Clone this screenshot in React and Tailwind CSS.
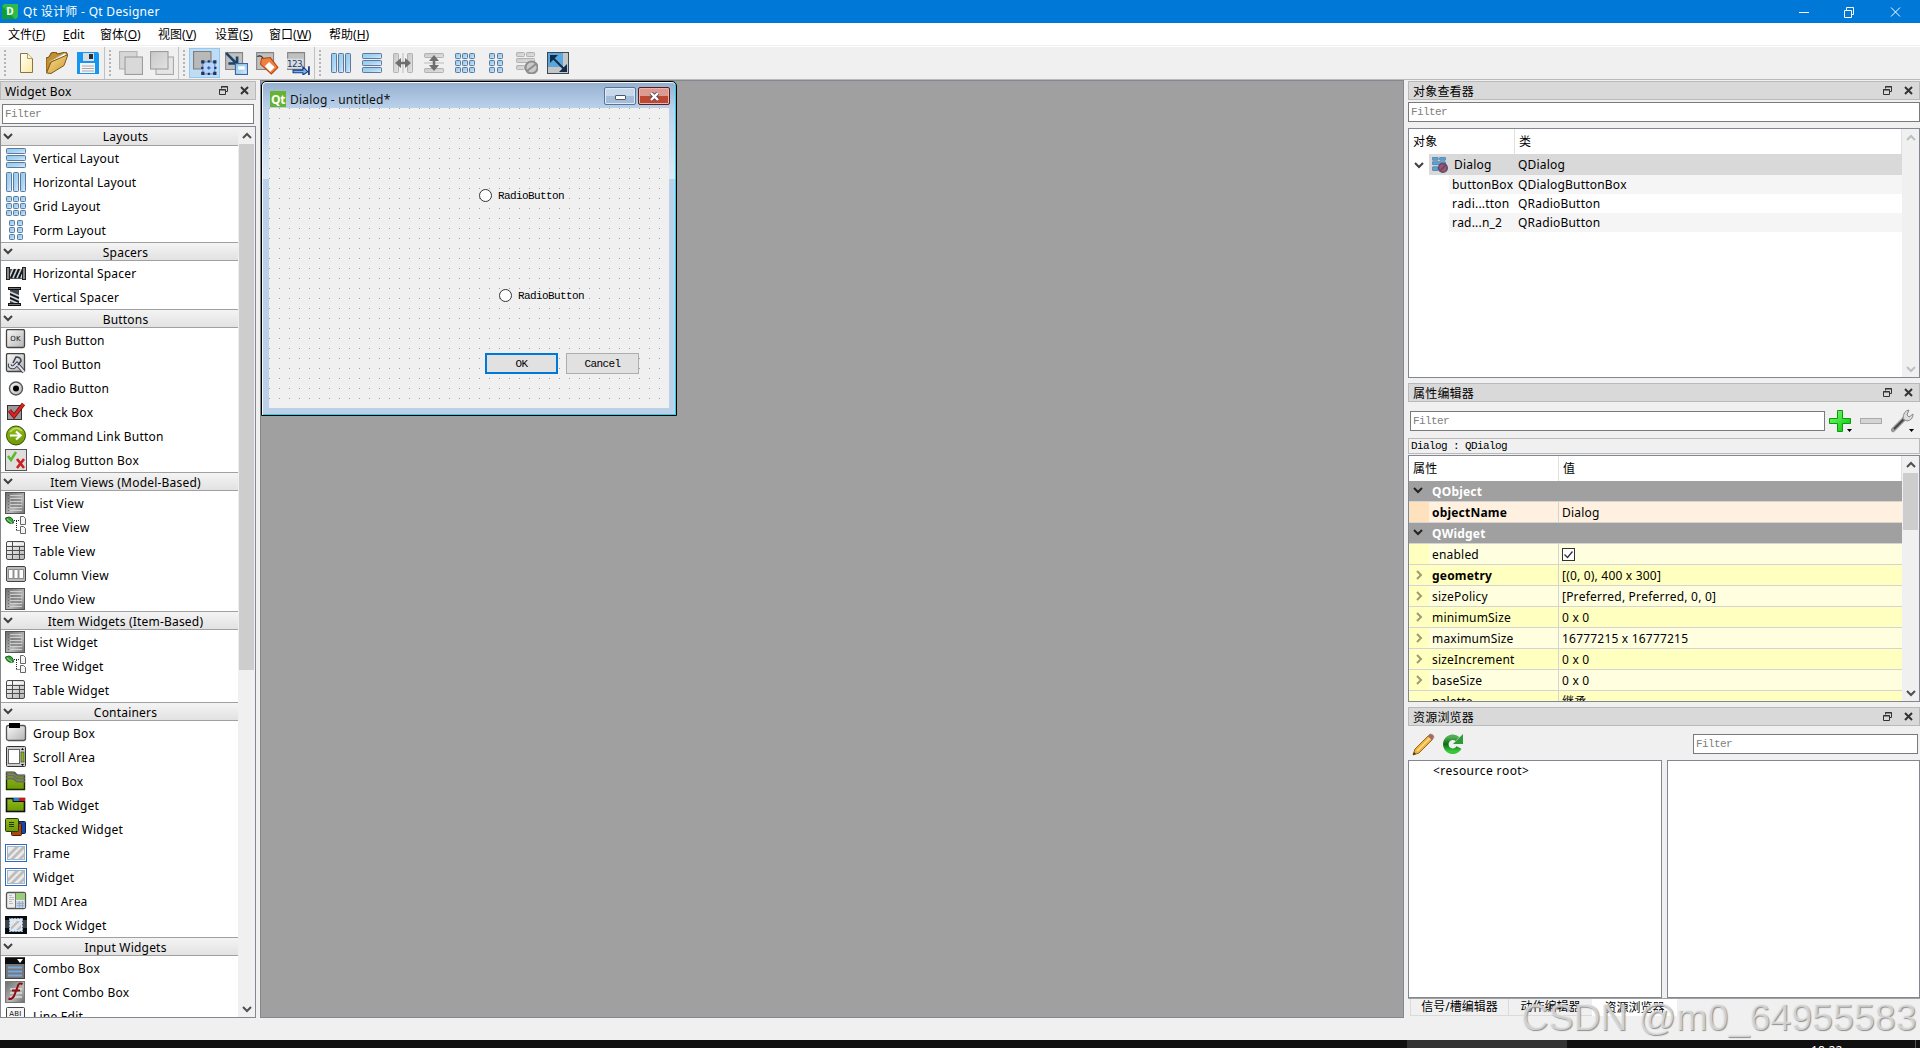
const simsun = "font-['Liberation_Mono','Noto_Sans_CJK_SC',monospace] text-[11px] tracking-[-0.6px]";

/* Shared gradients, referenced by id from every icon. */
function Gradients() {
    return (
        <svg className="absolute h-0 w-0">
            <defs>
                <linearGradient id="blue" x1="0" y1="0" x2="1" y2="1">
                    <stop offset="0" stopColor="#8ccbf2" />
                    <stop offset="0.55" stopColor="#a9d5f2" />
                    <stop offset="1" stopColor="#dcf1fd" />
                </linearGradient>
                <linearGradient id="grey" x1="0" y1="0" x2="1" y2="1">
                    <stop offset="0" stopColor="#fafafa" />
                    <stop offset="1" stopColor="#b4b4b4" />
                </linearGradient>
                <linearGradient id="pale" x1="0" y1="0" x2="1" y2="1">
                    <stop offset="0" stopColor="#c8c8c8" />
                    <stop offset="1" stopColor="#e2e2e2" />
                </linearGradient>
                <linearGradient id="darkgrey" x1="0" y1="0" x2="1" y2="1">
                    <stop offset="0" stopColor="#6c6c6c" />
                    <stop offset="0.6" stopColor="#b8b8b8" />
                    <stop offset="1" stopColor="#6c6c6c" />
                </linearGradient>
                <linearGradient id="green" x1="0" y1="0" x2="0" y2="1">
                    <stop offset="0" stopColor="#8fba1c" />
                    <stop offset="1" stopColor="#6d9a05" />
                </linearGradient>
                <linearGradient id="page" x1="0" y1="0" x2="1" y2="1">
                    <stop offset="0" stopColor="#ffffff" />
                    <stop offset="1" stopColor="#fbe9a0" />
                </linearGradient>
                <linearGradient id="folder" x1="0" y1="0" x2="1" y2="1">
                    <stop offset="0" stopColor="#f8dc8c" />
                    <stop offset="1" stopColor="#cf9a35" />
                </linearGradient>
                <linearGradient id="plus" x1="0" y1="0" x2="1" y2="1">
                    <stop offset="0" stopColor="#7dff7a" />
                    <stop offset="1" stopColor="#00c400" />
                </linearGradient>
                <linearGradient id="refresh" x1="0" y1="0" x2="0" y2="1">
                    <stop offset="0" stopColor="#4fae50" />
                    <stop offset="0.5" stopColor="#0b6a14" />
                    <stop offset="1" stopColor="#35c93a" />
                </linearGradient>
            </defs>
        </svg>
    );
}

const Svg = ({ children, className = 'h-[22px] w-[22px]', box = '0 0 22 22' }) => (
    <svg viewBox={box} className={`block shrink-0 ${className}`} fill="none">
        {children}
    </svg>
);

const Bars = ({ rects, stroke = '#5f789b', fill = 'url(#blue)' }) =>
    rects.map(([x, y, w, h]) => (
        <rect key={`${x}-${y}`} x={x + 0.5} y={y + 0.5} width={w - 1} height={h - 1} rx="0.8" fill={fill} stroke={stroke} />
    ));

const grid = (xs, ys, w, h) => ys.flatMap((y) => xs.map((x) => [x, y, w, h]));

const VBars = () => <Bars rects={[[1, 1, 6, 20], [8, 1, 6, 20], [15, 1, 6, 20]]} />;
const HBars = () => <Bars rects={[[1, 1, 20, 6], [1, 8, 20, 6], [1, 15, 20, 6]]} />;
const Grid = () => <Bars rects={grid([1, 8, 15], [1, 8, 15], 6, 6)} />;
const Form = () => <Bars rects={grid([4, 12], [1, 8, 15], 6, 6)} />;

const ListIcon = () => (
    <>
        <rect x="0.5" y="0.5" width="19" height="21" fill="url(#darkgrey)" stroke="#555" />
        <path d="M5 3.5h12M5 6.5h12M5 9.5h12M5 12.5h12M5 15.5h12M5 18.5h12" stroke="#cfcfcf" />
        <path d="M3 3.5h1M3 6.5h1M3 9.5h1M3 12.5h1M3 15.5h1M3 18.5h1M6 8h10M6 11h10M6 14h10" stroke="#5a5a5a" strokeWidth="0.8" />
    </>
);
const TreeIcon = () => (
    <>
        <path d="M0.5 2q4-2 6 0t2 5q-4 1-6-1t-2-4z" fill="#3f9d43" stroke="#175f1d" />
        <path d="M2 3l5 4" stroke="#9be39b" />
        <path d="M9 4.5h6M11.500 5v10M11.500 14.500h4" stroke="#222" strokeDasharray="1 1" />
        <path d="M15.500 0.500h3l2 2v6h-5zM15.500 10.500h3l2 2v5h-5z" fill="#f5f5f5" stroke="#666" />
    </>
);
const TableIcon = () => (
    <>
        <rect x="1.500" y="1.500" width="18" height="18" rx="1.500" fill="url(#grey)" stroke="#4b4b4b" />
        <path d="M2 4h17" stroke="#fff" strokeWidth="2" opacity=".6" />
        <path d="M7.500 2v17M14.500 7v12M2 6.500h17M2 10.500h17M2 14.500h17" stroke="#4d4d4d" />
    </>
);
const Stripes = () => (
    <>
        <rect x="0.500" y="2.500" width="21" height="17" fill="#fff" stroke="#2c6cc0" />
        <rect x="2.500" y="4.500" width="17" height="13" fill="#ececec" stroke="#aab4c4" />
        <path d="M3 12l7-7h4L3 16zM5 17L17 5h2v2L9 17zM13 17l6-6v4l-2 2z" fill="#bdbdbd" />
    </>
);

const widgetIcons = {
    vlayout: <HBars />,
    hlayout: <VBars />,
    grid: <Grid />,
    form: <Form />,
    hspacer: (
        <>
            <path d="M4 7h14v10H4z" fill="#555" />
            <path d="M4 16l4-9M8 16l4-9M12 16l4-9M16 16l2-6" stroke="#c8d8e4" strokeWidth="1.500" />
            <path d="M6 16l4-9M10 16l4-9M14 16l4-9" stroke="#111" strokeWidth="1.500" />
            <rect x="1.500" y="5.500" width="3" height="12" fill="#888" stroke="#222" />
            <rect x="17.500" y="5.500" width="3" height="12" fill="#888" stroke="#222" />
        </>
    ),
    vspacer: (
        <>
            <path d="M5 4h9v14H5z" fill="#444" />
            <path d="M5 6l9 4M5 10l9 4M5 14l9 4" stroke="#c8d8e4" strokeWidth="1.500" />
            <path d="M5 8l9 4M5 12l9 4" stroke="#0c0c0c" strokeWidth="1.200" />
            <rect x="3.500" y="1.500" width="12" height="2" fill="#777" stroke="#111" />
            <rect x="3.500" y="17.500" width="12" height="2" fill="#777" stroke="#111" />
        </>
    ),
    push: (
        <>
            <rect x="1.500" y="0.500" width="18" height="18" rx="1.500" fill="url(#grey)" stroke="#444" strokeWidth="1.300" />
            <text x="10.500" y="12" textAnchor="middle" fill="#111" className="font-['DejaVu_Sans'] text-[7px]">OK</text>
        </>
    ),
    tool: (
        <>
            <rect x="1.500" y="0.500" width="18" height="18" rx="1.500" fill="url(#grey)" stroke="#444" strokeWidth="1.300" />
            <path d="M5 11q-1 4 4 3l3-3 7 8" stroke="#3b4252" strokeWidth="4" />
            <path d="M5 11q-1 4 4 3l3-3 7 8" stroke="#dfe2e6" strokeWidth="2" />
            <path d="M8 10l3-6q5 0 5 4l-3 4" stroke="#3b4252" strokeWidth="1.600" />
        </>
    ),
    radio: (
        <>
            <circle cx="11" cy="11.500" r="6.500" fill="url(#grey)" stroke="#555" strokeWidth="1.400" />
            <circle cx="11" cy="11.500" r="3" fill="#000" />
        </>
    ),
    check: (
        <>
            <rect x="2.500" y="4.500" width="14" height="14" fill="#999" stroke="#333" />
            <path d="M4.500 9.500l4.500 5.500 9.500-12" stroke="#701010" strokeWidth="4" />
            <path d="M4.500 9.500l4.500 5.500 9.500-12" stroke="#e02222" strokeWidth="2.400" />
        </>
    ),
    command: (
        <>
            <circle cx="11" cy="10.500" r="9.500" fill="url(#green)" stroke="#384c05" />
            <path d="M5 7q6-7 12-1" stroke="#c2dd6c" strokeWidth="1.500" />
            <path d="M5 10.500h10M11 6.500l4.500 4-4.500 4" stroke="#fff" strokeWidth="2.200" />
        </>
    ),
    buttonbox: (
        <>
            <rect x="0.500" y="0.500" width="21" height="21" fill="#dedede" stroke="#555" />
            <path d="M3 7l3 4 5-8" stroke="#5cba2c" strokeWidth="2.500" />
            <path d="M12 10l7 9M19 10l-7 9" stroke="#cc1f1f" strokeWidth="2.600" />
        </>
    ),
    list: <ListIcon />,
    tree: <TreeIcon />,
    table: <TableIcon />,
    column: (
        <>
            <rect x="1.500" y="2.500" width="19" height="15" rx="1.500" fill="#bbb" stroke="#444" />
            <path d="M3.500 5.500h4.500v9H3.500zM9 5.500h4v9H9zM14 5.500h4.500v9h-4.500z" fill="#fff" stroke="#777" strokeWidth=".8" />
        </>
    ),
    group: (
        <>
            <rect x="1.500" y="3.500" width="19" height="15" rx="2" fill="url(#grey)" stroke="#555" strokeWidth="1.300" />
            <rect x="4" y="1" width="11" height="5" fill="#000" />
        </>
    ),
    scroll: (
        <>
            <rect x="1.500" y="0.500" width="19" height="20" rx="1" fill="#ccc" stroke="#333" />
            <rect x="3.500" y="3.500" width="11" height="14" fill="#fff" stroke="#666" />
            <rect x="16" y="6" width="3" height="10" fill="#8ab81c" stroke="#333" strokeWidth=".6" />
            <path d="M16 4l1.500-2L19 4zM16 18l1.500 2 1.500-2z" fill="#000" />
        </>
    ),
    toolbox: (
        <>
            <path d="M1.500 2.500h8l3 3h7v14h-18z" fill="url(#green)" stroke="#1c2a00" strokeWidth="1.400" />
            <path d="M1 2.500h7l4 3h8M1 5.500h7l4 3h8M1 8.500h7l4 3h8" stroke="#6a6a6a" strokeWidth="1.800" />
        </>
    ),
    tab: (
        <>
            <rect x="1.500" y="4.500" width="18" height="13" fill="url(#green)" stroke="#111" strokeWidth="1.600" />
            <rect x="8" y="4" width="6" height="3" fill="#1d86d0" />
            <rect x="14" y="4" width="6" height="3" fill="#d01818" />
            <path d="M8 4v3.500h12" stroke="#111" />
        </>
    ),
    stacked: (
        <>
            <rect x="10.500" y="3.500" width="10" height="12" rx="1" fill="#1748a8" stroke="#0b1e50" />
            <rect x="6.500" y="5.500" width="10" height="12" rx="1" fill="#a84712" stroke="#4c1c02" />
            <rect x="0.500" y="0.500" width="13" height="13" rx="1" fill="url(#green)" stroke="#26380a" />
            <path d="M4 4.500h5M4 6.500h5M4 8.500h5" stroke="#263800" />
        </>
    ),
    frame: <Stripes />,
    mdi: (
        <>
            <rect x="1.500" y="2.500" width="19" height="16" rx="1.500" fill="#eee" stroke="#555" strokeWidth="1.300" />
            <rect x="11" y="3" width="9" height="7" fill="#9ccb7c" />
            <rect x="11" y="11" width="9" height="7" fill="#bcd4ee" />
            <path d="M4 5.500h3M4 7.500h5M4 9.500h5M4 11.500h3M4 13.500h4M12 13.500h7M12 15.500h7M14.500 11v7M17.500 11v7" stroke="#999" strokeWidth=".6" />
            <path d="M10.500 3v15" stroke="#777" />
        </>
    ),
    dock: (
        <>
            <rect x="0" y="2" width="22" height="18" fill="#0a0a0a" />
            <path d="M0 6h22v8H0z" fill="#777" opacity=".5" />
            <rect x="4.500" y="4.500" width="13" height="13" fill="#e6e6e6" stroke="#fff" />
            <rect x="4.500" y="4.500" width="13" height="13" stroke="#2c6cc0" strokeDasharray="2 1" />
            <path d="M6 13l6-6h3l-9 9zM11 16l5-5v3l-2 2z" fill="#bbb" />
        </>
    ),
    combo: (
        <>
            <rect x="0.500" y="0.500" width="19" height="21" fill="#777" stroke="#444" />
            <rect x="0" y="1" width="20" height="6" fill="#0c0c0c" />
            <path d="M12 2h6l-3 4z" fill="#fff" />
            <path d="M3 10.500h14M3 14.500h14M3 18.500h14" stroke="#76a7e0" strokeWidth="2" />
        </>
    ),
    font: (
        <>
            <rect x="0.500" y="0.500" width="19" height="21" fill="url(#darkgrey)" stroke="#777" />
            <path d="M5 8h12M5 12h12M5 16h12" stroke="#ddd" strokeWidth="1.500" />
            <path d="M17.500 3q-4-2-5 3L9 15q-2 4-5.500 2.500M7 9.500h8" stroke="#8d0c10" strokeWidth="2" />
        </>
    ),
    line: (
        <>
            <rect x="1.500" y="2.500" width="18" height="12" rx="1" fill="#f6f6f6" stroke="#444" />
            <text x="10.500" y="11" textAnchor="middle" fill="#111" className="font-['DejaVu_Sans'] text-[7px]">ABI</text>
        </>
    ),
};

const categories = [
    { title: 'Layouts', items: [['vlayout', 'Vertical Layout'], ['hlayout', 'Horizontal Layout'], ['grid', 'Grid Layout'], ['form', 'Form Layout']] },
    { title: 'Spacers', items: [['hspacer', 'Horizontal Spacer'], ['vspacer', 'Vertical Spacer']] },
    {
        title: 'Buttons',
        items: [['push', 'Push Button'], ['tool', 'Tool Button'], ['radio', 'Radio Button'], ['check', 'Check Box'], ['command', 'Command Link Button'], ['buttonbox', 'Dialog Button Box']],
    },
    { title: 'Item Views (Model-Based)', items: [['list', 'List View'], ['tree', 'Tree View'], ['table', 'Table View'], ['column', 'Column View'], ['list', 'Undo View']] },
    { title: 'Item Widgets (Item-Based)', items: [['list', 'List Widget'], ['tree', 'Tree Widget'], ['table', 'Table Widget']] },
    {
        title: 'Containers',
        items: [
            ['group', 'Group Box'], ['scroll', 'Scroll Area'], ['toolbox', 'Tool Box'], ['tab', 'Tab Widget'], ['stacked', 'Stacked Widget'],
            ['frame', 'Frame'], ['frame', 'Widget'], ['mdi', 'MDI Area'], ['dock', 'Dock Widget'],
        ],
    },
    { title: 'Input Widgets', items: [['combo', 'Combo Box'], ['font', 'Font Combo Box'], ['line', 'Line Edit']] },
];

const menus = [
    ['文件', 'F', 'w-[55px]'],
    ['', 'Edit', 'w-[37px]'],
    ['窗体', 'O', 'w-[58px]'],
    ['视图', 'V', 'w-[57px]'],
    ['设置', 'S', 'w-[54px]'],
    ['窗口', 'W', 'w-[60px]'],
    ['帮助', 'H', 'w-[60px]'],
];

const Chevron = ({ dir = 'down', color = '#404040' }) => {
    const paths = { down: 'M1 3l4 4 4-4', up: 'M1 7l4-4 4 4', right: 'M3 1l4 4-4 4' };
    return (
        <Svg box="0 0 10 10" className="h-[10px] w-[10px]">
            <path d={paths[dir]} stroke={color} strokeWidth="2" />
        </Svg>
    );
};

function DockTitle({ children }) {
    return (
        <div className="flex h-[19px] shrink-0 items-center border border-[#b9b9b9] bg-[#d9d9d9] pl-1 text-black">
            <span className="flex-1 pt-[2px]">{children}</span>
            <Svg box="0 0 9 9" className="h-[9px] w-[9px]">
                <path d="M2.500 2.500v-2h6v5h-2M2 1h7M.500 3.500h6v5h-6zM0 4h7" stroke="#333" />
            </Svg>
            <Svg box="0 0 9 9" className="ml-3 mr-[6px] h-[9px] w-[9px]">
                <path d="M1 1l7 7M8 1l-7 7" stroke="#333" strokeWidth="2" />
            </Svg>
        </div>
    );
}

const Filter = ({ className }) => (
    <div className={`flex shrink-0 items-center border border-[#7a7a7a] bg-white pl-[2px] pt-px text-[#808080] ${simsun} ${className}`}>Filter</div>
);

function ScrollBar({ thumb, disabled }) {
    const color = disabled ? '#bfbfbf' : '#505050';
    return (
        <div className="flex w-[17px] shrink-0 flex-col items-center bg-[#f0f0f0]">
            <div className="flex h-[17px] shrink-0 items-center"><Chevron dir="up" color={color} /></div>
            <div className={`w-[15px] bg-[#cdcdcd] ${thumb}`} />
            <div className="flex-1" />
            <div className="flex h-[17px] shrink-0 items-center"><Chevron color={color} /></div>
        </div>
    );
}

const Handle = () => (
    <div className="mt-[3px] h-[27px] w-[2px] shrink-0 bg-[repeating-linear-gradient(to_bottom,#b4b4b4_0_2px,transparent_2px_4px)]" />
);

const Divider = () => <div className="ml-px mr-1 h-[32px] w-px shrink-0 bg-[#c0c0c0]" />;

const GreyBack = () => <path d="M1.500 1.500h15.500v15.500h-15.500z" fill="#c0c0c0" stroke="#848484" />;

const fileTools = [
    <>
        <path d="M5.500 1.500h7l5 5v14h-12z" fill="url(#page)" stroke="#8c7440" />
        <path d="M12.500 1.500v5h5" fill="#fff6cc" stroke="#b29a5c" />
    </>,
    <>
        <path d="M0 20V6l3-1 2-4 5-1 1 2 9-2 2 3" fill="#c48f2e" stroke="#6f4e12" />
        <path d="M3 10L19 1l2 3" fill="#fff" stroke="#c0b48c" />
        <path d="M0.500 21l4.500-11 17-7.500-4 11L5 21.500z" fill="url(#folder)" stroke="#7a5717" />
    </>,
    <>
        <path d="M0 0h21l1 2v20H0z" fill="#1496f2" />
        <rect x="6" y="1" width="11" height="8" fill="#d8dde2" />
        <rect x="12" y="2" width="4" height="5" fill="#2a2f35" />
        <rect x="3" y="11" width="15" height="10" fill="#f4f4f4" />
        <path d="M5 14h12M5 16.500h12M5 19h12" stroke="#a8a8a8" />
    </>,
];

const orderTools = [
    <>
        <rect x="0.500" y="0.500" width="16" height="16" fill="#d7d7d7" stroke="#b3b3b3" />
        <rect x="5.500" y="5.500" width="16" height="16" fill="#d9d9d9" stroke="#9d9d9d" />
    </>,
    <>
        <rect x="5.500" y="5.500" width="16" height="16" fill="#e5e5e5" stroke="#a9a9a9" />
        <rect x="0.500" y="0.500" width="16" height="16" fill="url(#pale)" stroke="#9d9d9d" />
    </>,
];

const editTools = [
    <>
        <path d="M0.500 0.500h16v16h-16z" fill="#b9b9b9" stroke="#7d7d7d" />
        <rect x="9" y="10" width="11" height="11" fill="#b4d2fc" stroke="#6d8fc2" />
        <path d="M7.500 8.500h3v3h-3zM13.500 8.500h2v2h-2zM18.500 8.500h3v3h-3zM7.500 14.500h2v2h-2zM19.500 14.500h2v2h-2zM7.500 19h3v3h-3zM13.500 20h2v2h-2zM18.500 19h3v3h-3z" fill="#1b365f" />
        <path d="M14.500 14v3M13 15.500h3" stroke="#2355a0" />
    </>,
    <>
        <GreyBack />
        <path d="M2 2l9 9M4 11.500h8V5" stroke="#1b4569" strokeWidth="2.400" />
        <rect x="10.500" y="11.500" width="11" height="10" fill="url(#blue)" stroke="#3c65a2" />
        <path d="M13 15.500h6" stroke="#fff" strokeWidth="3" />
    </>,
    <>
        <GreyBack />
        <path d="M2 5q5-2 6 4" stroke="#333" />
        <path d="M6 7l8-1 7 9-6 6-10-9z" fill="#f08040" stroke="#b54910" />
        <path d="M13 10l5 5-4 4-5-5z" fill="#fff" />
    </>,
    <>
        <GreyBack />
        <path d="M1 7h15v9H1z" fill="#dcdcdc" />
        <text x="1" y="14.500" fill="#123a7a" className="font-['DejaVu_Sans'] text-[8px] tracking-[-0.500px]">123</text>
        <path d="M6.500 17.500h9v-3l4.500 4.500-4.500 3v-2h-9z" fill="#7fb0f0" stroke="#153c80" />
        <path d="M21 14v8" stroke="#153c80" strokeWidth="1.600" />
    </>,
];

const GreyBars = ({ rects }) => <Bars rects={rects} fill="url(#pale)" stroke="#b1b1b1" />;

const layoutTools = [
    <VBars />,
    <HBars />,
    <>
        <GreyBars rects={[[1, 1, 6, 20], [15, 1, 6, 20]]} />
        <path d="M11 1v20" stroke="#bbb" />
        <path d="M5 11h12" stroke="#6e6e6e" strokeWidth="2.500" />
        <path d="M3 11l6-5v10zM19 11l-6-5v10z" fill="#6e6e6e" />
    </>,
    <>
        <GreyBars rects={[[1, 1, 20, 5], [1, 16, 20, 5]]} />
        <path d="M1 11h20" stroke="#bbb" />
        <path d="M11 5v12" stroke="#6e6e6e" strokeWidth="2.500" />
        <path d="M11 3l5 6H6zM11 19l5-6H6z" fill="#6e6e6e" />
    </>,
    <Grid />,
    <Form />,
    <>
        <GreyBars rects={[[0, 0, 9, 5], [10, 0, 9, 5], [0, 6, 19, 5], [0, 13, 9, 5]]} />
        <circle cx="15.500" cy="15.500" r="6" fill="#c9c9c9" stroke="#8e8e8e" strokeWidth="2" />
        <path d="M11 19l9-7" stroke="#8e8e8e" strokeWidth="2" />
    </>,
    <>
        <rect x="0.500" y="0.500" width="21" height="21" fill="#c5c5c5" stroke="#3d4855" />
        <rect x="1" y="1" width="15" height="14" fill="#5ba6da" />
        <path d="M5 5l13 13" stroke="#0f2d4c" strokeWidth="2" />
        <path d="M3 3h8l-8 8zM20 20h-8l8-8z" fill="#0f2d4c" />
    </>,
];

const ToolGroup = ({ tools, activeIndex, large }) => (
    <div className="ml-1 flex pt-px">
        {tools.map((tool, i) => (
            <div
                key={i}
                className={`flex h-[30px] w-[31px] shrink-0 items-center justify-center ${i === activeIndex ? 'border border-[#90c8f6] bg-[#c0dcf3]' : ''}`}
            >
                <Svg className={large ? 'h-6 w-6' : 'h-[22px] w-[22px]'}>{tool}</Svg>
            </div>
        ))}
    </div>
);

function Toolbar() {
    return (
        <div className="flex h-[32px] shrink-0 bg-[#f0f0f0] pl-1">
            <Handle />
            <ToolGroup tools={fileTools} />
            <Divider />
            <Handle />
            <ToolGroup tools={orderTools} large />
            <Divider />
            <Handle />
            <ToolGroup tools={editTools} activeIndex={0} large />
            <Divider />
            <Handle />
            <ToolGroup tools={layoutTools} />
        </div>
    );
}

function WidgetBox() {
    return (
        <div className="flex w-[256px] shrink-0 flex-col pt-px">
            <DockTitle>Widget Box</DockTitle>
            <Filter className="ml-[2px] mt-1 h-5 w-[252px]" />
            <div className="mt-[2px] flex h-[892px] overflow-hidden border border-[#828790] bg-white">
                <div className="h-full w-[237px] shrink-0 overflow-hidden">
                    {categories.map((category, index) => (
                        <div key={category.title}>
                            <div className={`flex h-[19px] items-center border-b border-[#a0a0a0] bg-linear-to-b from-[#f4f4f4] to-[#e2e2e2] pl-[2px] ${index ? 'border-t' : ''}`}>
                                <div className="pb-px"><Chevron /></div>
                                <span className="flex-1 pt-[2px] text-center">{category.title}</span>
                            </div>
                            {category.items.map(([icon, label]) => (
                                <div key={label} className="flex h-6 items-center pl-1">
                                    <Svg>{widgetIcons[icon]}</Svg>
                                    <span className="pl-[6px] pt-[2px]">{label}</span>
                                </div>
                            ))}
                        </div>
                    ))}
                </div>
                <ScrollBar thumb="h-[526px]" />
            </div>
        </div>
    );
}

/* The form being edited: its children sit at free positions on the dotted canvas. */
function DialogForm() {
    return (
        <div className="flex h-[335px] w-[416px] flex-col rounded-t-[5px] border border-black bg-[#bbd1ea] shadow-[inset_1px_1px_0_#f4f8fc,inset_-1px_-1px_0_#24d3ea]">
            <div className="mx-px mt-px flex h-[25px] shrink-0 rounded-t-[4px] bg-linear-to-b from-[#96b1d0] to-[#bad1ea] pl-[7px]">
                <Svg box="0 0 16 16" className="mt-2 h-4 w-4">
                    <rect width="16" height="16" fill="#65b32e" />
                    <text x="8" y="12.500" textAnchor="middle" fill="#fff" className="font-['Open_Sans'] text-[12px] font-bold tracking-[-0.500px]">Qt</text>
                </Svg>
                <span className="flex-1 pl-1 pt-[8px] leading-[17px] text-[#111]">Dialog - untitled*</span>
                <div className="mt-1 flex h-[18px] w-8 items-center justify-center rounded-[2px] border border-[#5a7396] bg-linear-to-b from-[#c8d9ec] from-50% to-[#a3bcd8] to-50% shadow-[inset_0_0_0_1px_#dfe9f5]">
                    <div className="mt-[3px] h-[5px] w-[11px] rounded-[1px] border border-[#4d5766] bg-white" />
                </div>
                <div className="ml-[2px] mr-[5px] mt-1 flex h-[18px] w-8 items-center justify-center rounded-[2px] border border-[#56201f] bg-linear-to-b from-[#dd9a91] from-50% to-[#bc4733] to-50% shadow-[inset_0_0_0_1px_#e9b5ad]">
                    <Svg box="0 0 11 9" className="h-[9px] w-[11px]">
                        <path d="M2 1l7 7M9 1L2 8" stroke="#5d4a5a" strokeWidth="4" />
                        <path d="M2 1l7 7M9 1L2 8" stroke="#fff" strokeWidth="2.400" />
                    </Svg>
                </div>
            </div>
            <div className="flex">
                <div className="ml-px h-[71px] w-[6px] bg-linear-to-b from-[#bbd1ea] to-[#e0eaf6]" />
                <div className={`relative h-[300px] w-[400px] bg-[#f0f0f0] bg-[linear-gradient(90deg,transparent_1px,#f0f0f0_1px),linear-gradient(#a0a0a0_1px,transparent_1px)] bg-[size:10px_10px] text-black ${simsun}`}>
                    <div className="absolute left-[210px] top-[80px] flex items-center gap-[6px] leading-[15px]">
                        <span className="h-[13px] w-[13px] rounded-full border border-[#333] bg-white" />
                        <span className="pt-[2px] leading-[13px]">RadioButton</span>
                    </div>
                    <div className="absolute left-[230px] top-[180px] flex items-center gap-[6px] leading-[15px]">
                        <span className="h-[13px] w-[13px] rounded-full border border-[#333] bg-white" />
                        <span className="pt-[2px] leading-[13px]">RadioButton</span>
                    </div>
                    <div className="absolute left-[216px] top-[245px] flex h-[21px] w-[73px] items-center justify-center border-2 border-[#0078d7] bg-[#e1e1e1] pt-[2px]">OK</div>
                    <div className="absolute left-[297px] top-[245px] flex h-[21px] w-[73px] items-center justify-center border border-[#adadad] bg-[#e1e1e1] pt-[2px]">Cancel</div>
                </div>
                <div className="h-[71px] w-[6px] bg-linear-to-b from-[#bbd1ea] to-[#e0eaf6]" />
            </div>
        </div>
    );
}

const objects = [
    ['buttonBox', 'QDialogButtonBox', 'bg-[#f5f5f5]'],
    ['radi...tton', 'QRadioButton', 'bg-white'],
    ['rad...n_2', 'QRadioButton', 'bg-[#f5f5f5]'],
];

function ObjectInspector() {
    return (
        <>
            <DockTitle>对象查看器</DockTitle>
            <Filter className="mt-[2px] h-5" />
            <div className="mt-[6px] flex h-[250px] shrink-0 border border-[#828790] bg-white">
                <div className="w-[493px] shrink-0">
                    <div className="flex h-[25px] items-center border-r border-[#e0e0e0]">
                        <span className="flex h-full w-[106px] items-center border-r border-[#e0e0e0] pl-1 pt-px">对象</span>
                        <span className="pl-1 pt-px">类</span>
                    </div>
                    <div className="flex h-[21px] items-center pl-[5px]">
                        <Chevron />
                        <div className="ml-[5px] flex h-full flex-1 items-center bg-[#d9d9d9] pl-[3px]">
                            <Svg className="h-4 w-4" box="0 0 22 22">
                                <Bars rects={[[0, 0, 9, 5], [10, 0, 9, 5], [0, 6, 19, 5], [0, 13, 9, 6]]} fill="#5ea3d6" stroke="#4677a3" />
                                <circle cx="15" cy="15" r="6" fill="#a5536c" stroke="#5a4a6c" strokeWidth="2" />
                                <path d="M11 19l8-8" stroke="#5a4a6c" strokeWidth="2" />
                            </Svg>
                            <span className="w-[70px] pl-[6px] pt-px">Dialog</span>
                            <span className="pt-px">QDialog</span>
                        </div>
                    </div>
                    {objects.map(([name, type, bg]) => (
                        <div key={name} className={`ml-10 flex h-[19px] items-center pl-[3px] pt-px ${bg}`}>
                            <span className="w-[66px]">{name}</span>
                            <span>{type}</span>
                        </div>
                    ))}
                </div>
                <ScrollBar thumb="h-0" disabled />
            </div>
        </>
    );
}

const properties = [
    { name: 'QObject', group: true },
    { name: 'objectName', value: 'Dialog', bold: true, bg: 'bg-[#fff0df]', strip: 'bg-[#ffe2bd]' },
    { name: 'QWidget', group: true },
    { name: 'enabled', check: true, bg: 'bg-[#ffffdf]' },
    { name: 'geometry', value: '[(0, 0), 400 x 300]', bold: true, expand: true, bg: 'bg-[#ffffbf]' },
    { name: 'sizePolicy', value: '[Preferred, Preferred, 0, 0]', expand: true, bg: 'bg-[#ffffdf]' },
    { name: 'minimumSize', value: '0 x 0', expand: true, bg: 'bg-[#ffffbf]' },
    { name: 'maximumSize', value: '16777215 x 16777215', expand: true, bg: 'bg-[#ffffdf]' },
    { name: 'sizeIncrement', value: '0 x 0', expand: true, bg: 'bg-[#ffffbf]' },
    { name: 'baseSize', value: '0 x 0', expand: true, bg: 'bg-[#ffffdf]' },
    { name: 'palette', value: '继承', bg: 'bg-[#ffffbf]' },
];

function PropertyRow({ name, value, group, bold, check, expand, bg, strip = 'bg-[#ffffbf]' }) {
    if (group) {
        return (
            <div className="flex h-[21px] items-center border-b border-[#d4d4d4] bg-[#a0a0a0] pl-1 font-bold text-white">
                <div className="pb-[2px]"><Chevron color="#222" /></div>
                <span className="pl-[9px] pt-[2px]">{name}</span>
            </div>
        );
    }
    return (
        <div className={`flex h-[21px] border-b border-[#d4d4d4] ${bg}`}>
            <span className={`flex w-5 items-center pl-[5px] ${strip}`}>{expand && <Chevron dir="right" color="#9c9c70" />}</span>
            <span className={`flex w-[130px] items-center border-r border-[#d4d4d4] pl-[3px] pt-[2px] ${bold ? 'font-bold' : ''}`}>{name}</span>
            <span className={`flex items-center ${check ? 'pl-1' : 'pl-[3px] pt-[2px]'}`}>
                {check ? (
                    <Svg box="0 0 13 13" className="-ml-px h-[13px] w-[13px]">
                        <rect x=".5" y=".5" width="12" height="12" fill="#fff" stroke="#333" />
                        <path d="M2.500 6.500l3 3 5-6" stroke="#333" strokeWidth="1.300" />
                    </Svg>
                ) : value}
            </span>
        </div>
    );
}

const DropArrow = () => <path d="M18 20h5l-2.500 3z" fill="#000" />;

function PropertyEditor() {
    return (
        <>
            <div className="mt-[5px]"><DockTitle>属性编辑器</DockTitle></div>
            <div className="mt-[6px] flex h-[26px] shrink-0 items-center pl-[2px]">
                <Filter className="h-5 w-[415px]" />
                <Svg box="0 0 24 24" className="ml-1 h-6 w-6">
                    <path d="M8.500 1.500h5v8h8v5h-8v8h-5v-8h-8v-5h8z" fill="url(#plus)" stroke="#0a9a0a" />
                    <DropArrow />
                </Svg>
                <Svg box="0 0 24 24" className="ml-[7px] h-6 w-6">
                    <rect x=".5" y="9.500" width="21" height="5" fill="#d4d4d4" stroke="#aaa" />
                </Svg>
                <Svg box="0 0 24 24" className="ml-[7px] h-6 w-6">
                    <path d="M2 21L14 9" stroke="#999" strokeWidth="4.500" strokeLinecap="round" />
                    <path d="M3 20L13 10" stroke="#444" strokeWidth="1.800" />
                    <path d="M12 10q0-8 6-9l-2 5 2 2 4-3q0 6-6 7z" fill="#ddd" stroke="#888" />
                    <DropArrow />
                </Svg>
            </div>
            <div className={`mt-1 flex h-4 shrink-0 items-center border border-[#b9b9b9] pl-[2px] pt-px ${simsun}`}>Dialog : QDialog</div>
            <div className="mt-px flex h-[247px] shrink-0 overflow-hidden border border-[#828790] bg-white">
                <div className="h-full w-[493px] shrink-0 overflow-hidden">
                    <div className="flex h-[25px] items-center border-r border-[#e0e0e0]">
                        <span className="flex h-full w-[150px] items-center border-r border-[#e0e0e0] pl-1 pt-px">属性</span>
                        <span className="pl-1 pt-px">值</span>
                    </div>
                    {properties.map((property) => <PropertyRow key={property.name} {...property} />)}
                </div>
                <ScrollBar thumb="h-[57px]" />
            </div>
        </>
    );
}

function ResourceBrowser() {
    return (
        <>
            <div className="mt-[5px]"><DockTitle>资源浏览器</DockTitle></div>
            <div className="mt-[6px] flex h-[24px] shrink-0 items-center pl-1">
                <Svg box="0 0 23 23" className="h-[23px] w-[23px]">
                    <path d="M1 22l2-6L17 2l4 4L7 20z" fill="#f0b03c" stroke="#9a6a18" />
                    <path d="M5 18L18 5" stroke="#ffe29a" strokeWidth="1.500" />
                    <path d="M16 3l2-2q3 0 4 3l-2 3z" fill="#c0604c" stroke="#8b8b8b" />
                    <path d="M1 22l1-3 2 2z" fill="#333" />
                </Svg>
                <Svg className="ml-[7px] h-[22px] w-[22px]">
                    <path d="M17 14.500A7 7 0 1 1 15.500 6" stroke="url(#refresh)" strokeWidth="5.500" />
                    <path d="M21 1v10H11z" fill="#2f9a38" />
                </Svg>
                <Filter className="ml-auto mr-[2px] h-5 w-[225px]" />
            </div>
            <div className="mt-1 flex h-[238px] shrink-0 gap-[5px]">
                <div className="w-[254px] border border-[#828790] bg-white pl-[24px] pt-[2px] leading-[16px] tracking-[0.4px]">&lt;resource root&gt;</div>
                <div className="flex-1 border border-[#828790] bg-white" />
            </div>
            <div className="flex h-[18px] shrink-0 border-t border-[#a0a0a0] pl-[2px] tracking-normal">
                <span className="flex w-[99px] items-center justify-center border border-t-0 border-[#dadada]">信号/槽编辑器</span>
                <span className="flex w-[83px] items-center justify-center border-b border-[#dadada]">动作编辑器</span>
                <span className="flex w-[85px] items-center justify-center bg-white">资源浏览器</span>
            </div>
        </>
    );
}

export default function App() {
    return (
        <div className="relative flex h-[1048px] w-[1920px] flex-col overflow-hidden bg-[#f0f0f0] font-['Noto_Sans','Noto_Sans_CJK_SC',sans-serif] text-[12px] leading-none tracking-[0.2px] text-black [font-kerning:none]">
            <Gradients />
            <header className="flex h-[23px] shrink-0 items-center bg-[#0078d7] pl-[2px] text-white">
                <Svg box="0 0 16 15" className="h-[15px] w-4">
                    <path d="M2 0h14v13l-2 2H0V2z" fill="#2dbb4b" />
                    <path d="M0 15V2l13 13z" fill="#139b36" />
                    <text x="8" y="11" textAnchor="middle" fill="#fff" className="font-['Open_Sans'] text-[10px] font-bold">D</text>
                </Svg>
                <span className="flex-1 pl-[5px] pt-px tracking-[0.3px]">Qt 设计师 - Qt Designer</span>
                <Svg box="0 0 104 12" className="mr-[18px] h-3 w-[104px]">
                    <path d="M1 6.500h10M46.500 4.500h7v7h-7zM48.500 4.500v-3h7v7h-2M93 1.500l9 9M102 1.500l-9 9" stroke="#fff" />
                </Svg>
            </header>
            <nav className="flex h-[22px] shrink-0 items-center bg-white pl-[8px] pt-[2px] tracking-normal">
                {menus.map(([label, key, width]) => (
                    <span key={key} className={width}>
                        {label ? <>{label}(<u>{key}</u>)</> : <><u>E</u>dit</>}
                    </span>
                ))}
            </nav>
            <div className="h-[2px] shrink-0 border-b border-white bg-[#f0f0f0]" />
            <Toolbar />
            <div className="h-px shrink-0 bg-[#b9b9b9]" />
            <main className="flex h-[938px] shrink-0">
                <WidgetBox />
                <div className="ml-1 w-[1144px] shrink-0 border border-[#828790] bg-[#a0a0a0]">
                    <DialogForm />
                </div>
                <div className="ml-1 flex w-[512px] shrink-0 flex-col pt-px">
                    <ObjectInspector />
                    <PropertyEditor />
                    <ResourceBrowser />
                </div>
            </main>
            <div className="h-[22px] shrink-0" />
            <footer className="flex h-2 shrink-0 overflow-hidden bg-[#101010] pl-[1407px] text-white">
                <div className="h-full w-[160px] bg-[#333]" />
                <span className="ml-[244px] mt-[5px] w-[104px]">18:22</span>
                <div className="h-full w-px bg-[#555]" />
            </footer>
            <div className="absolute left-[1521px] top-[998px] whitespace-nowrap font-['Liberation_Sans',sans-serif] text-[37.6px] leading-[38px] tracking-normal text-[#ececec]/70 [text-shadow:1px_1px_1px_#909090]">
                CSDN @m0_64955583
            </div>
        </div>
    );
}
